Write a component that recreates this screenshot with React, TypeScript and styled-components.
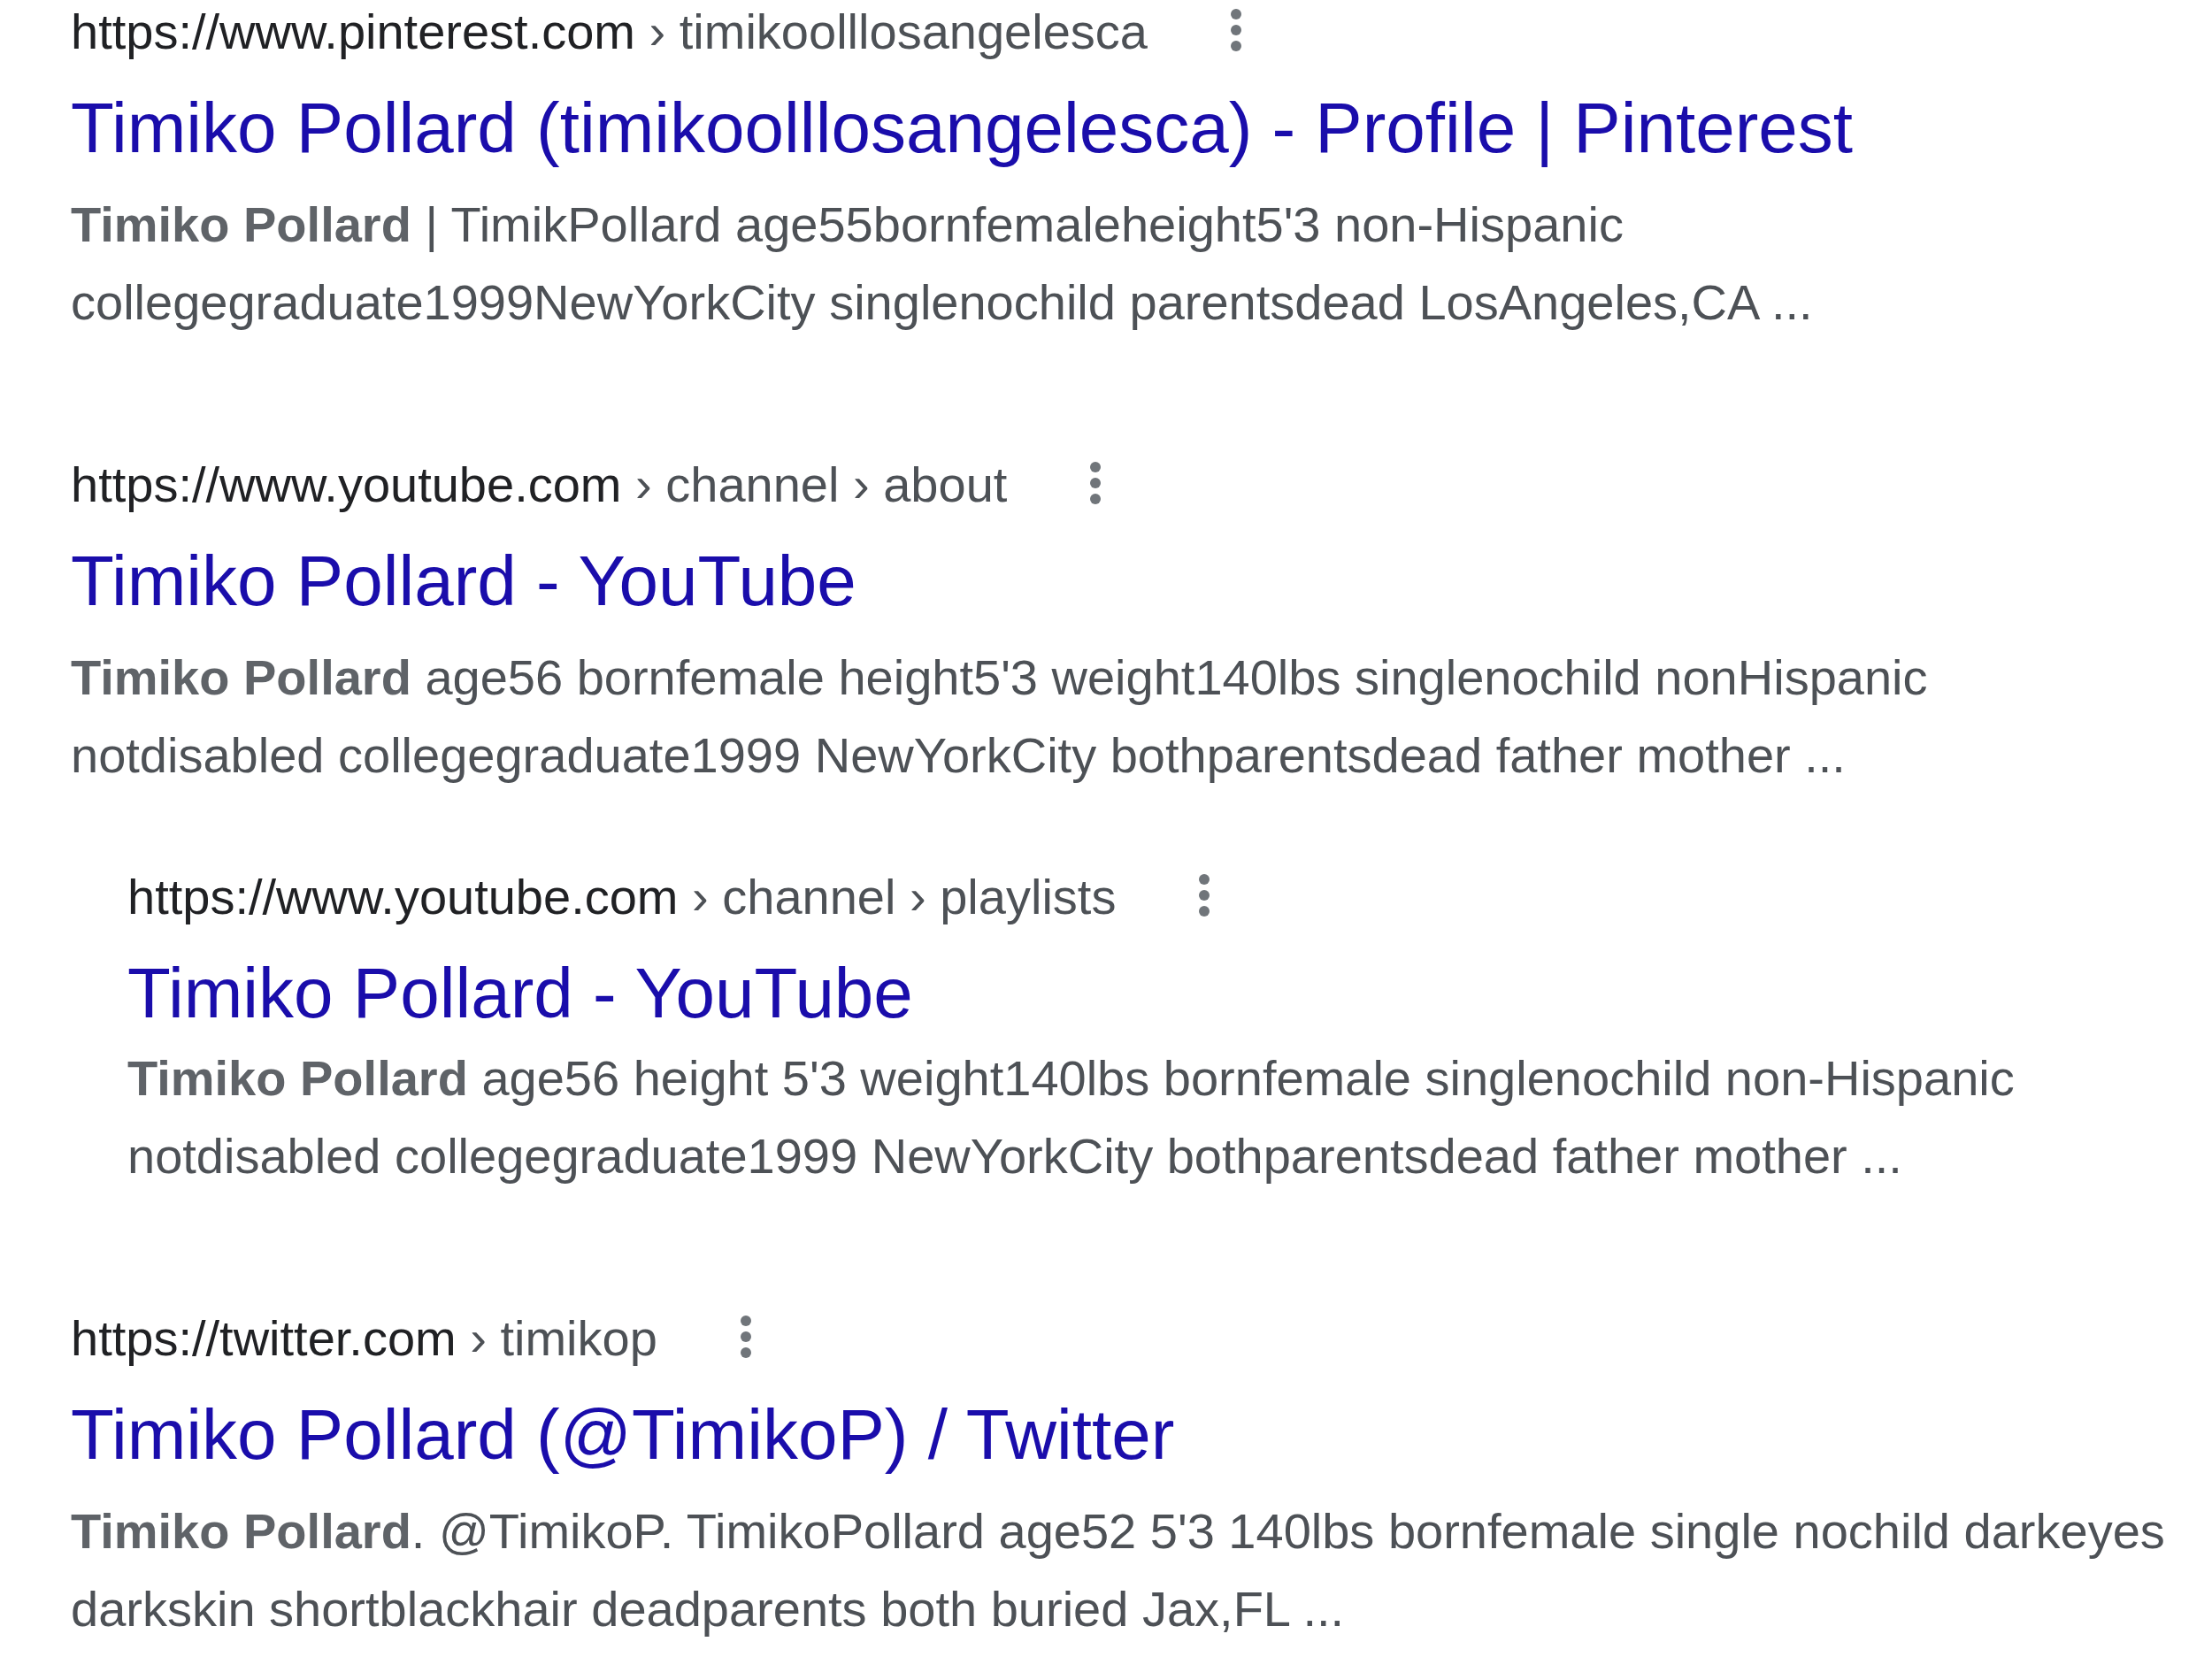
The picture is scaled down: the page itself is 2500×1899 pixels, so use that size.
import * as React from 'react'
import styled, { createGlobalStyle } from 'styled-components'

type Hit = {
  domain: string
  crumbs: string
  title: string
  lead: string
  text: string
  tight?: boolean
  children?: Hit[]
}

const hits: Hit[] = [
  {
    domain: 'https://www.pinterest.com',
    crumbs: ' › timikoolllosangelesca',
    title: 'Timiko Pollard (timikoolllosangelesca) - Profile | Pinterest',
    lead: 'Timiko Pollard',
    text: " | TimikPollard age55bornfemaleheight5'3 non-Hispanic collegegraduate1999NewYorkCity singlenochild parentsdead LosAngeles,CA ...",
  },
  {
    domain: 'https://www.youtube.com',
    crumbs: ' › channel › about',
    title: 'Timiko Pollard - YouTube',
    lead: 'Timiko Pollard',
    text: " age56 bornfemale height5'3 weight140lbs singlenochild nonHispanic notdisabled collegegraduate1999 NewYorkCity bothparentsdead father mother ...",
    children: [
      {
        domain: 'https://www.youtube.com',
        crumbs: ' › channel › playlists',
        title: 'Timiko Pollard - YouTube',
        lead: 'Timiko Pollard',
        text: " age56 height 5'3 weight140lbs bornfemale singlenochild non-Hispanic notdisabled collegegraduate1999 NewYorkCity bothparentsdead father mother ...",
        tight: true,
      },
    ],
  },
  {
    domain: 'https://twitter.com',
    crumbs: ' › timikop',
    title: 'Timiko Pollard (@TimikoP) / Twitter',
    lead: 'Timiko Pollard',
    text: ". @TimikoP. TimikoPollard age52 5'3 140lbs bornfemale single nochild darkeyes darkskin shortblackhair deadparents both buried Jax,FL ...",
  },
]

const MoreIcon = () => (
  <svg viewBox="0 0 24 24" width="72" height="72">
    <circle cx="12" cy="6" r="2" />
    <circle cx="12" cy="12" r="2" />
    <circle cx="12" cy="18" r="2" />
  </svg>
)

const Result = ({ hit }: { hit: Hit }) => (
  <ResultBlock>
    <UrlRow>
      <Cite>
        <Domain>{hit.domain}</Domain>
        <Crumbs>{hit.crumbs}</Crumbs>
      </Cite>
      <MoreButton>
        <MoreIcon />
      </MoreButton>
    </UrlRow>
    <Title>{hit.title}</Title>
    <Snippet $tight={hit.tight}>
      <Em>{hit.lead}</Em>
      {hit.text}
    </Snippet>
    {hit.children &&
      hit.children.map((child, i) => (
        <Nested key={i}>
          <Result hit={child} />
        </Nested>
      ))}
  </ResultBlock>
)

export default function App() {
  return (
    <>
      <GlobalStyle />
      <Page>
        {hits.map((hit, i) => (
          <Result key={i} hit={hit} />
        ))}
      </Page>
    </>
  )
}

// STYLED COMPONENTS

const GlobalStyle = createGlobalStyle`
  body {
    margin: 0;
    background: #fff;
    font-family: "Liberation Sans", Arial, sans-serif;
  }
`

const Page = styled.main`
  display: flex;
  flex-direction: column;
  gap: 126px;
  width: 2375px;
  padding: 0 0 60px 80px;
`

const ResultBlock = styled.article`
  display: flex;
  flex-direction: column;
`

const UrlRow = styled.div`
  display: flex;
  align-items: center;
  height: 72px;
  font-size: 56px;
  line-height: 72px;
  white-space: nowrap;
`

const Cite = styled.cite`
  font-style: normal;
`

const Domain = styled.span`
  color: #202124;
`

const Crumbs = styled.span`
  color: #4d5156;
`

const MoreButton = styled.span`
  display: flex;
  width: 72px;
  height: 72px;
  margin-left: 64px;
  margin-top: -5px;
  fill: #70757a;
`

const Title = styled.h3`
  margin: 21px 0 0;
  font-size: 80px;
  line-height: 104px;
  font-weight: 400;
  color: #1a0dab;
`

const Snippet = styled.div<{ $tight?: boolean }>`
  margin-top: ${p => (p.$tight ? 0 : 13)}px;
  font-size: 56px;
  line-height: 88px;
  color: #4d5156;
`

const Em = styled.b`
  font-weight: 700;
  color: #5f6368;
`

const Nested = styled.div`
  display: flex;
  flex-direction: column;
  margin: 80px 0 0 64px;
`
